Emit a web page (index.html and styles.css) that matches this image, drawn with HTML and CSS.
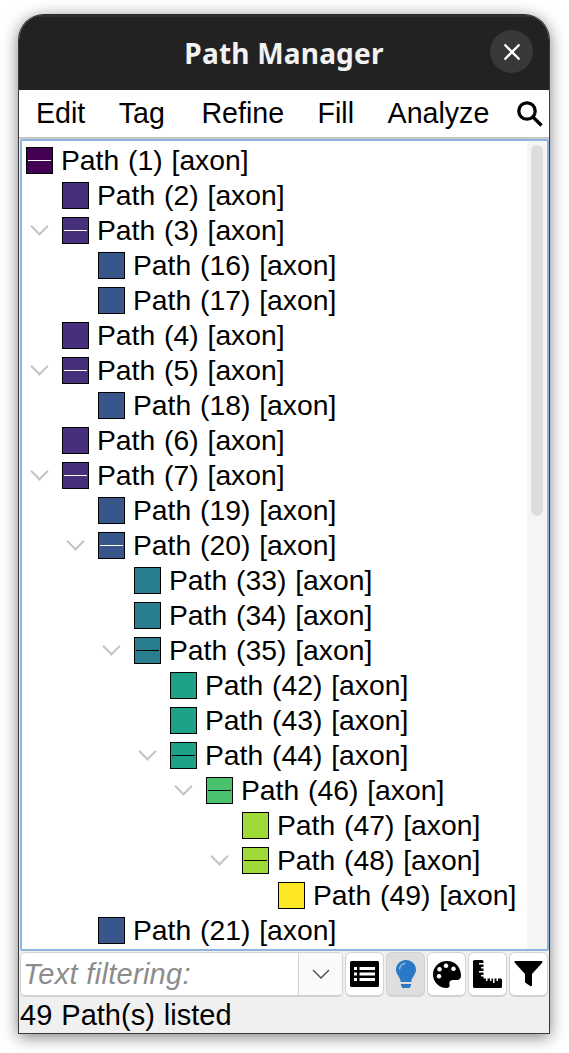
FILE: index.html
```html
<!DOCTYPE html>
<html lang="en">
<head>
    <meta charset="UTF-8">
    <title>Path Manager</title>
    <link rel="stylesheet" href="styles.css">
</head>
<body>

<div class="window">
    <div class="titlebar">
        <span class="title">Path Manager</span>
        <button class="close">
            <svg width="18" height="18" viewBox="0 0 18 18"><path d="M1.500 1.500l15 15M16.500 1.500l-15 15" stroke="#fff" stroke-width="2.300"/></svg>
        </button>
    </div>

    <div class="menubar">
        <span class="menu m-edit">Edit</span>
        <span class="menu m-tag">Tag</span>
        <span class="menu m-refine">Refine</span>
        <span class="menu m-fill">Fill</span>
        <span class="menu m-analyze">Analyze</span>
        <svg class="search" width="27" height="27" viewBox="0 0 27 27"><circle cx="11" cy="11" r="8.200" fill="none" stroke="#000" stroke-width="3.300"/><path d="M17 17l8.500 8.500" stroke="#000" stroke-width="3.300"/></svg>
    </div>

    <div class="tree">
        <div class="rows">
            <div class="row d0"><span class="swatch c0 line-w"></span>Path (1) [axon]</div>
            <div class="row d1"><span class="swatch c1"></span>Path (2) [axon]</div>
            <div class="row d1 open"><span class="swatch c1 line-w"></span>Path (3) [axon]</div>
            <div class="row d2"><span class="swatch c2"></span>Path (16) [axon]</div>
            <div class="row d2"><span class="swatch c2"></span>Path (17) [axon]</div>
            <div class="row d1"><span class="swatch c1"></span>Path (4) [axon]</div>
            <div class="row d1 open"><span class="swatch c1 line-w"></span>Path (5) [axon]</div>
            <div class="row d2"><span class="swatch c2"></span>Path (18) [axon]</div>
            <div class="row d1"><span class="swatch c1"></span>Path (6) [axon]</div>
            <div class="row d1 open"><span class="swatch c1 line-w"></span>Path (7) [axon]</div>
            <div class="row d2"><span class="swatch c2"></span>Path (19) [axon]</div>
            <div class="row d2 open"><span class="swatch c2 line-w"></span>Path (20) [axon]</div>
            <div class="row d3"><span class="swatch c3"></span>Path (33) [axon]</div>
            <div class="row d3"><span class="swatch c3"></span>Path (34) [axon]</div>
            <div class="row d3 open"><span class="swatch c3 line-b"></span>Path (35) [axon]</div>
            <div class="row d4"><span class="swatch c4"></span>Path (42) [axon]</div>
            <div class="row d4"><span class="swatch c4"></span>Path (43) [axon]</div>
            <div class="row d4 open"><span class="swatch c4 line-b"></span>Path (44) [axon]</div>
            <div class="row d5 open"><span class="swatch c5 line-b"></span>Path (46) [axon]</div>
            <div class="row d6"><span class="swatch c6"></span>Path (47) [axon]</div>
            <div class="row d6 open"><span class="swatch c6 line-b"></span>Path (48) [axon]</div>
            <div class="row d7"><span class="swatch c7"></span>Path (49) [axon]</div>
            <div class="row d2"><span class="swatch c2"></span>Path (21) [axon]</div>
        </div>
        <div class="scrollbar"><div class="thumb"></div></div>
    </div>

    <div class="filterbar">
        <div class="combo">
            <span class="placeholder">Text filtering:</span>
            <span class="combo-arrow"><svg width="18" height="10" viewBox="0 0 18 10"><path d="M1 1l8 8 8-8" fill="none" stroke="#555" stroke-width="1.500"/></svg></span>
        </div>
        <button class="tool">
            <svg width="29" height="26" viewBox="0 0 29 26"><path fill-rule="evenodd" d="M1.500 0h26A1.500 1.500 0 0 1 29 1.500v23a1.500 1.500 0 0 1-1.500 1.500h-26A1.500 1.500 0 0 1 0 24.500v-23A1.500 1.500 0 0 1 1.500 0zM4 6v3h3V6zM9.500 6v3H25V6zM4 11.500v3h3v-3zM9.500 11.500v3H25v-3zM4 17v3h3v-3zM9.500 17v3H25v-3z"/></svg>
        </button>
        <button class="tool active">
            <svg width="20" height="28" viewBox="0 0 20 28"><path fill="#2a78c6" d="M10 0C4.500 0 0 4.300 0 9.600c0 4.900 3.900 7 4.800 12.400h10.400c.9-5.400 4.800-7.500 4.800-12.400C20 4.300 15.500 0 10 0z"/><path fill="none" stroke="#8ebce6" stroke-width="1.500" d="M3.500 9.500C3.500 6 6.200 3.500 9.500 3.500"/><path fill="#2a78c6" d="M5 24h10v1.500L13.500 28h-7L5 25.500z"/></svg>
        </button>
        <button class="tool">
            <svg width="28" height="27" viewBox="0 0 28 27"><path fill-rule="evenodd" d="M14 0C6 0 0 6 0 13.500S6 27 13.500 27c2.500 0 3.500-1.500 3-3.500-.6-2.300.4-4.500 3-4.500h4.500c2.500 0 4-1.700 4-4.500C28 6 22 0 14 0zM6 13a2.300 2.300 0 1 0 .01 0zM6.500 6a2.300 2.300 0 1 0 .01 0zM13 2.500a2.300 2.300 0 1 0 .01 0zM20.500 5.500a2.300 2.300 0 1 0 .01 0z"/></svg>
        </button>
        <button class="tool">
            <svg width="29" height="28" viewBox="0 0 29 28"><path d="M0 1.500A1.500 1.500 0 0 1 1.500 0H9a1.500 1.500 0 0 1 1.500 1.500V3H6v1.500h4.500V7H8v1.500h2.500V11H6v1.500h4.500V15H8v1.500h2.500v2H13V21h1.500v-2.500H17V21h1.500v-2.500H20V23h1.500v-4.500h2V21H25v-2.500h2.500A1.500 1.500 0 0 1 29 20v6.500a1.500 1.500 0 0 1-1.500 1.500h-26A1.500 1.500 0 0 1 0 26.500z"/></svg>
        </button>
        <button class="tool">
            <svg width="29" height="26" viewBox="0 0 28 26"><path d="M1 0h26c1 0 1.300 1 .7 1.800L17.500 13v11c0 1-1 1.500-1.800 1l-4.500-3c-.5-.3-.7-.7-.7-1.300V13L.3 1.800C-.3 1 0 0 1 0z"/></svg>
        </button>
    </div>

    <div class="status">49 Path(s) listed</div>
</div>

</body>
</html>
```

FILE: styles.css
```css
html, body {
    height: 100%;
}
body {
    margin: 0;
    background: #fff;
    font-family: "Liberation Sans", Arial, sans-serif;
    overflow: hidden;
}
.window {
    box-sizing: border-box;
    width: 532px;
    height: 1020px;
    margin: 14px 0 0 18px;
    display: flex;
    flex-direction: column;
    background: #f0f0f0;
    border: 1px solid #3a3a3a;
    border-top-color: #2a2a2a;
    border-radius: 26px 26px 0 0;
    box-shadow: 0 3px 16px rgba(0, 0, 0, 0.5);
    overflow: hidden;
}
.titlebar {
    flex: none;
    height: 75px;
    background: #222;
    box-shadow: inset 0 2px 0 #303030;
    display: flex;
    align-items: center;
    justify-content: center;
    position: relative;
}
.title {
    color: #f2f2f2;
    font-family: "Noto Sans", sans-serif;
    font-size: 28px;
    letter-spacing: 0.2px;
    font-weight: 700;
}
.close {
    position: absolute;
    right: 16px;
    top: 15px;
    width: 43px;
    height: 43px;
    border: 0;
    border-radius: 50%;
    background: #383838;
    padding: 0;
    display: flex;
    align-items: center;
    justify-content: center;
}

.menubar {
    flex: none;
    height: 47px;
    background: #fff;
    border-bottom: 2px solid #c8c8c8;
    display: flex;
    align-items: center;
    font-size: 28.600px;
    color: #000;
}
.menu { margin-left: 33.500px; }
.m-edit { margin-left: 17px; }
.m-refine { margin-left: 36.500px; }
.search { margin-left: auto; margin-right: 6px; }

.tree {
    flex: none;
    height: 812px;
    box-sizing: border-box;
    margin-left: 1px;
    background: #fff;
    border: 2px solid #8fb4dc;
    border-radius: 2px;
    display: flex;
    overflow: hidden;
}
.rows {
    flex: 1;
    padding-top: 2px;
    overflow: hidden;
}
.row {
    height: 35px;
    display: flex;
    align-items: center;
    font-size: 28.300px;
    word-spacing: 1px;
    white-space: nowrap;
    color: #000;
    position: relative;
}
.d0 { padding-left: 4px; }
.d1 { padding-left: 40px; }
.d2 { padding-left: 76px; }
.d3 { padding-left: 112px; }
.d4 { padding-left: 148px; }
.d5 { padding-left: 184px; }
.d6 { padding-left: 220px; }
.d7 { padding-left: 256px; }

.swatch {
    flex: none;
    box-sizing: border-box;
    width: 27px;
    height: 27px;
    border: 1px solid #000;
    margin-right: 8px;
    position: relative;
}
.line-w::after,
.line-b::after {
    content: "";
    position: absolute;
    left: 1px;
    right: 1px;
    top: 12px;
    height: 1px;
}
.line-w::after { background: #fff; }
.line-b::after { background: #000; }

/* viridis steps by tree depth */
.c0 { background: #440154; }
.c1 { background: #472f7d; }
.c2 { background: #39568c; }
.c3 { background: #287d8e; }
.c4 { background: #1fa187; }
.c5 { background: #4ac16d; }
.c6 { background: #a0da39; }
.c7 { background: #fde725; }

/* expander chevron, sits left of the swatch */
.open::before {
    content: "";
    position: absolute;
    width: 13px;
    height: 13px;
    margin-left: -29.500px;
    margin-top: -9px;
    border-right: 2px solid #c4c4c4;
    border-bottom: 2px solid #c4c4c4;
    transform: rotate(45deg);
    box-sizing: border-box;
}

.scrollbar {
    flex: none;
    width: 20px;
    background: #f5f5f5;
    padding: 4px 4px 0 4px;
    box-sizing: border-box;
}
.thumb {
    height: 371px;
    background: #dcdcdc;
    border-radius: 6px;
}

.filterbar {
    flex: none;
    height: 49px;
    box-sizing: border-box;
    padding: 1px 0 0 1px;
    display: flex;
    align-items: flex-start;
    gap: 2px;
}
.combo {
    flex: none;
    box-sizing: border-box;
    width: 323px;
    height: 45px;
    background: #fff;
    border: 1px solid #d2d2d2;
    border-bottom-width: 2px;
    border-radius: 5px;
    display: flex;
    align-items: center;
    overflow: hidden;
}
.placeholder {
    flex: 1;
    padding-left: 2px;
    font-size: 29px;
    letter-spacing: 0.300px;
    font-style: italic;
    color: #8c8c8c;
}
.combo-arrow {
    flex: none;
    width: 43px;
    height: 100%;
    border-left: 1px solid #d2d2d2;
    background: #fafafa;
    display: flex;
    align-items: center;
    justify-content: center;
}
.tool {
    flex: none;
    box-sizing: border-box;
    width: 39px;
    height: 45px;
    padding: 0;
    margin: 0;
    background: #fff;
    border: 1px solid #d2d2d2;
    border-bottom-width: 2px;
    border-radius: 6px;
    display: flex;
    align-items: center;
    justify-content: center;
}
.tool.active { background: #dedede; }

.status {
    flex: 1;
    padding-left: 1px;
    font-size: 29px;
    word-spacing: 1px;
    line-height: 31px;
    color: #000;
    white-space: nowrap;
}
```
